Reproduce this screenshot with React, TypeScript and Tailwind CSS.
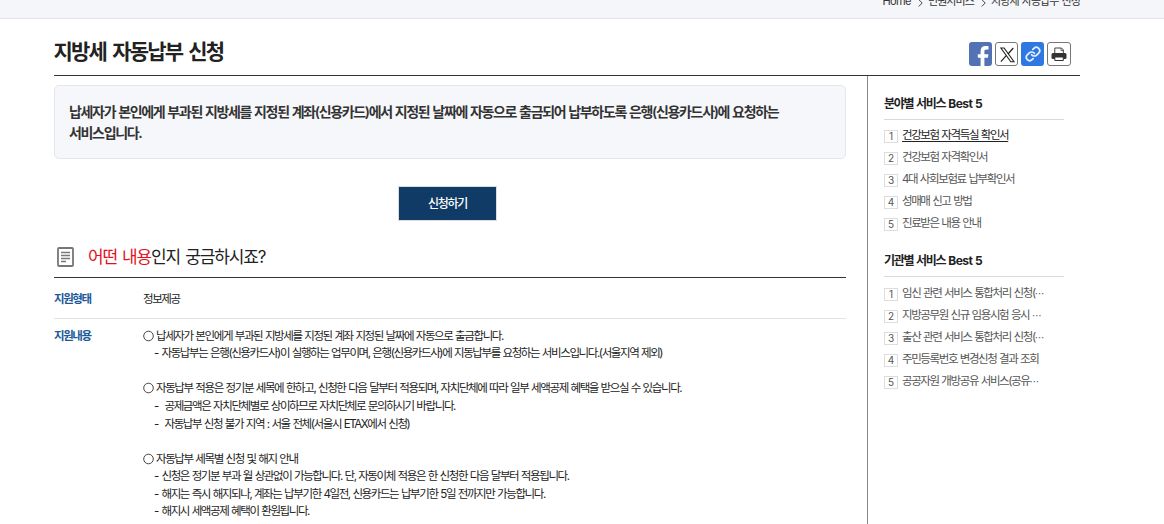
import React from 'react';
import clsx from 'clsx';

interface BestListProps {
  title: string;
  items: { label: string; more?: boolean; active?: boolean }[];
  className?: string;
}

const fieldBest = [
  { label: '건강보험 자격득실 확인서', active: true },
  { label: '건강보험 자격확인서' },
  { label: '4대 사회보험료 납부확인서' },
  { label: '성매매 신고 방법' },
  { label: '진료받은 내용 안내' },
];

const agencyBest = [
  { label: '임신 관련 서비스 통합처리 신청(', more: true },
  { label: '지방공무원 신규 임용시험 응시 ', more: true },
  { label: '출산 관련 서비스 통합처리 신청(', more: true },
  { label: '주민등록번호 변경신청 결과 조회' },
  { label: '공공자원 개방공유 서비스(공유', more: true },
];

const details = [
  { text: '납세자가 본인에게 부과된 지방세를 지정된 계좌 지정된 날짜에 자동으로 출금합니다.', level: 0 },
  { text: '자동납부는 은행(신용카드사)이 실행하는 업무이며, 은행(신용카드사)에 지동납부를 요청하는 서비스입니다.(서울지역 제외)', level: 1 },
  { text: '', level: 0 },
  { text: '자동납부 적용은 정기분 세목에 한하고, 신청한 다음 달부터 적용되며, 자치단체에 따라 일부 세액공제 혜택을 받으실 수 있습니다.', level: 0 },
  { text: '공제금액은 자치단체별로 상이하므로 자치단체로 문의하시기 바랍니다.', level: 2 },
  { text: '자동납부 신청 불가 지역 : 서울 전체(서울시 ETAX에서 신청)', level: 2 },
  { text: '', level: 0 },
  { text: '자동납부 세목별 신청 및 해지 안내', level: 0 },
  { text: '신청은 정기분 부과 월 상관없이 가능합니다. 단, 자동이체 적용은 한 신청한 다음 달부터 적용됩니다.', level: 1 },
  { text: '해지는 즉시 해지되나, 계좌는 납부기한 4일전, 신용카드는 납부기한 5일 전까지만 가능합니다.', level: 1 },
  { text: '해지시 세액공제 혜택이 환원됩니다.', level: 1 },
];

function Crumb({ children }: { children: React.ReactNode }) {
  return (
    <>
      <svg className="mt-[2px] mr-[5px] ml-[7px] h-2 w-[5px]" viewBox="0 0 5 8" fill="none" stroke="#444" strokeWidth="1">
        <path d="M.7.5 4.2 4 .7 7.5" />
      </svg>
      <span>{children}</span>
    </>
  );
}

function ShareButtons() {
  return (
    <div className="flex gap-[2px] pr-[9px]">
      <button className="h-6 w-[23px] overflow-hidden rounded-[3px] bg-[#5272b5]" aria-label="Facebook">
        <svg viewBox="0 0 23 24" className="h-6 w-[23px]" fill="#fff">
          <path d="M11.6 24v-8.3H8.8v-3.500h2.800V9.400c0-3.500 1.700-5.300 5-5.300 1.100 0 2.100.1 2.900.2v3.200h-2c-1.600 0-2.100.8-2.100 2.100v2.600h4l-.5 3.500h-3.500V24z" />
        </svg>
      </button>
      <button className="ml-px h-6 w-[23px] rounded-[3px] border border-[#777] bg-white" aria-label="X">
        <svg viewBox="0 0 21 22" className="h-[22px] w-[21px]" fill="none" stroke="#222">
          <path d="M4.900 5h3.200l9.900 13.800h-3.200z" strokeWidth="1.100" />
          <path d="M17.300 5l-5.300 6M10.200 12.700l-5.300 6" strokeWidth="1.200" />
        </svg>
      </button>
      <button className="ml-px flex h-6 w-[23px] items-center justify-center rounded-[3px] bg-[#2f78e4]" aria-label="URL">
        <svg viewBox="0 0 24 24" className="size-4" fill="none" stroke="#e8f0fc" strokeWidth="2.600" strokeLinecap="round" strokeLinejoin="round">
          <path d="M10 13a5 5 0 0 0 7.540.540l3-3a5 5 0 0 0-7.070-7.070l-1.720 1.710" />
          <path d="M14 11a5 5 0 0 0-7.540-.540l-3 3a5 5 0 0 0 7.070 7.070l1.710-1.710" />
        </svg>
      </button>
      <button className="ml-px h-6 w-6 rounded-[3px] border border-[#777] bg-white" aria-label="Print">
        <svg viewBox="0 0 22 22" className="size-[22px]">
          <path d="M6.800 10V5h6.700l1.800 1.800V10" fill="#fff" stroke="#444" strokeWidth="1" />
          <path d="M13 5v2.500h2.500" fill="none" stroke="#444" strokeWidth=".8" />
          <rect x="3.500" y="10" width="15" height="6" rx="1.500" fill="#333" />
          <path d="M6.800 14h8.500v3.500H6.800z" fill="#fff" stroke="#333" strokeWidth="1" />
        </svg>
      </button>
    </div>
  );
}

function BestList({ title, items, className }: BestListProps) {
  return (
    <section className={className}>
      <h2 className="h-[23px] border-b border-[#d9d9d9] text-[12px] leading-[14px] font-bold tracking-[-1.3px] text-[#222] [word-spacing:1.3px]">
        {title.replace(' Best 5', '')} <span className="tracking-[-0.45px] [word-spacing:0px]">Best 5</span>
      </h2>
      <ol className="pt-[5px]">
        {items.map((item, i) => (
          <li key={item.label} className="flex h-[22px] items-center">
            <span className="mr-[4px] flex h-[13px] w-[14px] shrink-0 items-center justify-center border border-[#ddd] pb-px text-[10px] leading-[10px] text-[#555]">
              {i + 1}
            </span>
            <span
              className={clsx(
                'text-[11.5px] tracking-[-1.4px] whitespace-pre [word-spacing:0.8px]',
                item.active ? 'text-[#222] underline underline-offset-2' : 'text-[#555]',
              )}
            >
              {item.label}
              {item.more && <span className="text-[9.5px]">⋯</span>}
            </span>
          </li>
        ))}
      </ol>
    </section>
  );
}

export default function App() {
  return (
    <div className="h-[524px] w-[1164px] overflow-hidden bg-white font-['Inter','Noto_Sans_CJK_KR',sans-serif] text-[#222]">
      <div className="h-[19px] overflow-hidden border-b border-[#e4e5ea] bg-[#f5f6fa]">
        <nav className="-mt-[7px] mr-[84px] flex h-[17px] items-center justify-end text-[11px] tracking-[-0.9px] text-[#333] [word-spacing:0.8px]">
          <span className="tracking-[-0.6px]">Home</span>
          <Crumb>민원서비스</Crumb>
          <Crumb>지방세 자동납부 신청</Crumb>
        </nav>
      </div>

      <div className="ml-[54px] w-[1026px]">
        <header className="flex h-[57px] items-start justify-between border-b border-[#333] pt-[23px]">
          <h1 className="-mt-[4px] -ml-[0.5px] text-[21px] leading-[28px] font-bold tracking-[-1.8px] [word-spacing:2.900px]">지방세 자동납부 신청</h1>
          <ShareButtons />
        </header>

        <div className="flex h-[448px]">
          <main className="w-[792px] pt-[9px]">
            <div className="h-[74px] rounded-[5px] border border-[#e5e6ec] bg-[#f6f7fa] px-[14px] pt-[15px] text-[14px] leading-[21px] font-semibold tracking-[-1.33px] whitespace-nowrap text-[#333] [word-spacing:0.75px]">
              <p>납세자가 본인에게 부과된 지방세를 지정된 계좌(신용카드)에서 지정된 날짜에 자동으로 출금되어 납부하도록 은행(신용카드사)에 요청하는</p>
              <p>서비스입니다.</p>
            </div>

            <div className="flex justify-center pt-[27px] pr-[5px]">
              <button className="h-[35px] w-[99px] border border-[#ddd] bg-[#0f3b66] text-[12px] font-medium tracking-[-1.3px] text-white">
                신청하기
              </button>
            </div>

            <h2 className="mt-[16px] flex h-[41px] items-center border-b border-[#333] text-[17px] tracking-[-1.15px] [word-spacing:1.5px]">
              <svg viewBox="0 0 17 20" className="mr-[14px] ml-[3px] h-5 w-[17px]" fill="none" stroke="#777" strokeWidth="1.800">
                <rect x="1" y="1" width="15" height="18" rx="1" />
                <path d="M4 5.500h9M4 8.500h9M4 11.500h9M4 14.500h5" strokeWidth="1.500" />
              </svg>
              <span className="pt-[2px]">
                <span className="text-[#e2111b]">어떤 내용</span>인지 궁금하시죠?
              </span>
            </h2>

            <dl className="text-[11.5px] tracking-[-1.4px] whitespace-nowrap [word-spacing:0.8px]">
              <div className="flex h-[41px] items-center border-b border-[#e2e2e2] pt-[4px]">
                <dt className="w-[89px] font-bold text-[#1c5a99]">지원형태</dt>
                <dd>정보제공</dd>
              </div>
              <div className="flex pt-[8.8px] leading-[17.550px]">
                <dt className="w-[89px] font-bold text-[#1c5a99]">지원내용</dt>
                <dd>
                  {details.map((line, i) => (
                    <p key={i} className="flex h-[17.550px]">
                      {line.text && line.level === 0 && (
                        <svg viewBox="0 0 12 12" className="mt-[2px] mr-px size-3" fill="none" stroke="#333" strokeWidth="0.900">
                          <circle cx="5.500" cy="6" r="4.800" />
                        </svg>
                      )}
                      {line.level > 0 && <span className={clsx('ml-[11px]', line.level === 2 ? 'w-[10.500px]' : 'w-[7.500px]')}>-</span>}
                      <span>{line.text}</span>
                    </p>
                  ))}
                </dd>
              </div>
            </dl>
          </main>

          <aside className="ml-[21px] w-[213px] border-l border-[#888] pt-[21px] pr-[16px] pl-4">
            <BestList title="분야별 서비스 Best 5" items={fieldBest} />
            <BestList title="기관별 서비스 Best 5" items={agencyBest} className="mt-[19px] [&>ol]:pt-[6px]" />
          </aside>
        </div>
      </div>
    </div>
  );
}
